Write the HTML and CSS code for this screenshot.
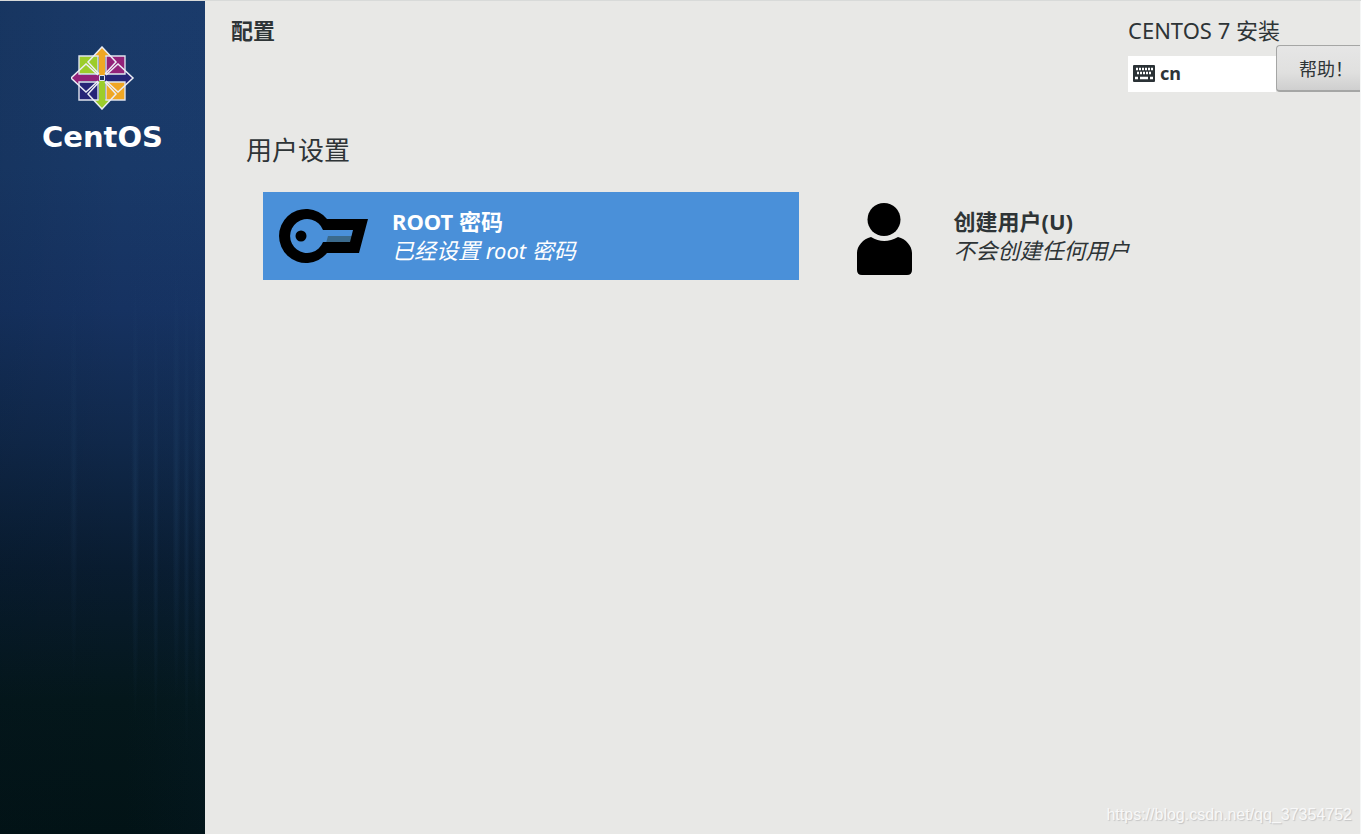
FILE: index.html
```html
<!DOCTYPE html>
<html lang="zh-CN">
<head>
  <meta charset="UTF-8">
  <meta name="viewport" content="width=device-width, initial-scale=1.0">
  <title>CentOS 7 安装</title>
  <link rel="stylesheet" href="styles.css">
</head>
<body>

  <aside class="sidebar">
    <svg class="logo" viewBox="-31 -32 64 64" aria-hidden="true">
      <path d="M0-31L9-21H3V-3H-3V-21H-9z" fill="#efa724"/>
      <path d="M0 31L9 21H3V3H-3V21H-9z" fill="#9ccd2a"/>
      <path d="M-31 0L-21-9V-3H-3V3H-21V9z" fill="#932279"/>
      <path d="M31 0L21-9V-3H3V3H21V9z" fill="#262577"/>
      <g stroke="#dfe3ee" stroke-width="1.4">
        <path d="M-23-22H-4V-4H-23z" fill="#9ccd2a"/>
        <path d="M4-22H23V-4H4z" fill="#932279"/>
        <path d="M-23 4H-4V22H-23z" fill="#262577"/>
        <path d="M4 4H23V22H4z" fill="#efa724"/>
      </g>
      <g fill="none" stroke="#eceef5" stroke-width="1.5">
        <path d="M-3-4L-14-16L0-31L14-16L3-4"/>
        <path d="M-3 4L-14 16L0 31L14 16L3 4"/>
        <path d="M-4-3L-16-14L-31 0L-16 14L-4 3"/>
        <path d="M4-3L16-14L31 0L16 14L4 3"/>
      </g>
      <path d="M-2.500-2.500H2.500V2.500H-2.500z" fill="#1d3566" stroke="#dfe3ee"/>
    </svg>
    <span class="brand">CentOS</span>
  </aside>

  <main class="main">
    <header class="header">
      <h1>配置</h1>
      <div class="header-right">
        <p class="product">CENTOS 7 安装</p>
        <div class="header-tools">
          <button class="keyboard" type="button">
            <svg viewBox="0 0 22 17" aria-hidden="true">
              <rect width="22" height="17" rx="1" fill="#2b3236"/>
              <path d="M3 4H20" stroke="#fff" stroke-width="2.5" stroke-dasharray="2 1"/>
              <path d="M4 8H19" stroke="#fff" stroke-width="2.5" stroke-dasharray="2 1"/>
              <path d="M2 13H5M7 13H15M17 13H20" stroke="#fff" stroke-width="2.5"/>
            </svg>
            cn
          </button>
          <button class="help" type="button">帮助！</button>
        </div>
      </div>
    </header>

    <section class="settings">
      <h2>用户设置</h2>
      <div class="spokes">
        <button class="spoke selected" type="button">
          <svg viewBox="0 0 96 80" aria-hidden="true">
            <path d="M52 40H78L76 47H50z" fill="#3b6a8c"/>
            <path fill-rule="evenodd" d="M51 23H92L83 57H51A27 27 0 1 1 51 23zM47 34A17 17 0 1 0 47 46H74L77 34z"/>
            <circle cx="25" cy="40" r="5.500"/>
          </svg>
          <span class="spoke-text">
            <strong>ROOT 密码</strong>
            <em>已经设置 root 密码</em>
          </span>
        </button>
        <button class="spoke" type="button">
          <svg viewBox="0 0 96 80" aria-hidden="true">
            <circle cx="46" cy="23.500" r="16.500"/>
            <path d="M33 41Q46 49 60 41C68 43 74 50 74 57V74Q74 79 69 79H24Q19 79 19 74V57C19 50 25 43 33 41z"/>
          </svg>
          <span class="spoke-text">
            <strong>创建用户(U)</strong>
            <em>不会创建任何用户</em>
          </span>
        </button>
      </div>
    </section>

    <span class="watermark">https://blog.csdn.net/qq_37354752</span>
  </main>

</body>
</html>
```
FILE: styles.css
```css
* {
  margin: 0;
  padding: 0;
  box-sizing: border-box;
}

body {
  display: flex;
  min-height: 100vh;
  border-top: 1px solid #d8dad9;
  font-family: "Noto Sans", "Noto Sans CJK SC", sans-serif;
  font-size: 22px;
  background-color: #e8e8e6;
  color: #2e3436;
}

button {
  border: none;
  background: none;
  font: inherit;
  color: inherit;
  cursor: pointer;
}

/* vertical light streaks over a blue to black fade */
.sidebar {
  display: flex;
  flex-direction: column;
  align-items: center;
  flex: 0 0 205px;
  padding-top: 45px;
  background:
    radial-gradient(4px 200px at 36% 58%, rgba(40, 80, 120, 0.16), transparent),
    radial-gradient(4px 220px at 66% 60%, rgba(40, 80, 120, 0.24), transparent),
    radial-gradient(3px 220px at 76% 62%, rgba(40, 80, 120, 0.24), transparent),
    radial-gradient(4px 220px at 86% 58%, rgba(40, 80, 120, 0.24), transparent),
    radial-gradient(3px 240px at 91% 62%, rgba(40, 80, 120, 0.2), transparent),
    radial-gradient(4px 220px at 96% 60%, rgba(40, 80, 120, 0.2), transparent),
    linear-gradient(90deg, rgba(0, 15, 25, 0.1), transparent 60%, rgba(30, 80, 150, 0.04)),
    linear-gradient(#1a3a69, #193968 20%, #163261 37%, #10284a 53%, #091c30 68%, #04171b 84%, #021316);
}

.logo {
  width: 64px;
  height: 64px;
}

.brand {
  margin-top: 7px;
  font-family: "DejaVu Sans", sans-serif;
  font-size: 29px;
  font-weight: bold;
  line-height: 40px;
  color: #fff;
}

.main {
  position: relative;
  flex: 1;
  border-right: 1px solid #f5f6f6;
}

.header {
  display: flex;
  justify-content: space-between;
  padding: 15px 0 0 26px;
}

.header h1 {
  font-size: 22px;
  line-height: 28px;
}

.header-right {
  width: 232px;
}

.product {
  padding-bottom: 1px;
  line-height: 28px;
}

.header-tools {
  display: flex;
  align-items: flex-end;
}

.keyboard {
  display: flex;
  flex: 1;
  align-items: center;
  gap: 5px;
  height: 36px;
  padding: 0 5px 2px;
  background-color: #fff;
  font-size: 18px;
  font-weight: bold;
}

.keyboard svg {
  width: 22px;
  height: 17px;
}

.help {
  width: 84px;
  height: 47px;
  padding-left: 22px;
  border: 1px solid #a5a6a5;
  border-bottom-width: 2px;
  border-right: none;
  border-radius: 4px 0 0 4px;
  background: linear-gradient(#e6e6e6, #e0e0df 60%, #cfcfcf);
  font-size: 18px;
  text-align: left;
  white-space: nowrap;
}

.settings {
  padding: 40px 0 0 41px;
}

.settings h2 {
  font-size: 26px;
  font-weight: normal;
  line-height: 36px;
}

.spokes {
  display: grid;
  grid-template-columns: 1fr 1fr;
  gap: 26px;
  padding: 24px 0 0 17px;
}

.spoke {
  display: flex;
  align-items: center;
  gap: 20px;
  height: 88px;
  padding: 0 13px;
  text-align: left;
}

.spoke.selected {
  background-color: #4a90d9;
  color: #fff;
}

.spoke svg {
  width: 96px;
  height: 80px;
  fill: #000;
}

.spoke-text strong,
.spoke-text em {
  display: block;
  line-height: 29px;
}

.watermark {
  position: absolute;
  right: 8px;
  bottom: 9px;
  font-family: "Liberation Sans", sans-serif;
  font-size: 16px;
  line-height: 20px;
  color: #f8f8f8;
  text-shadow: 1px 1px 1px #c4c4c4;
}
```
